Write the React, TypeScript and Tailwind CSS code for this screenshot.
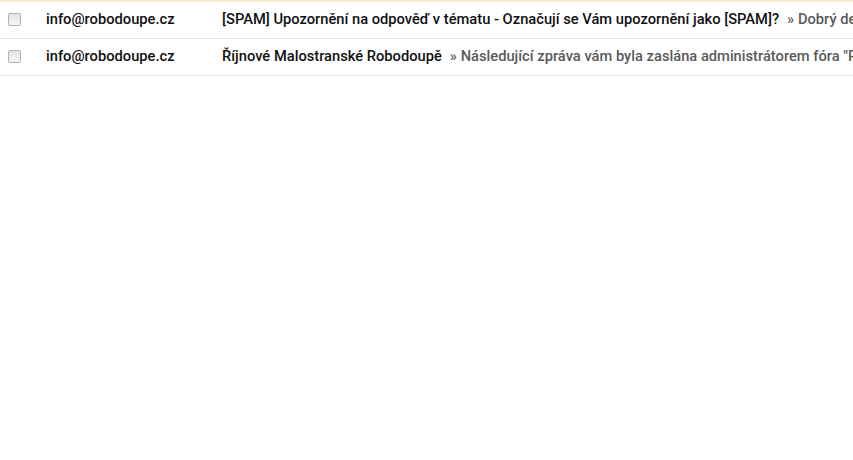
const ROWS = [
  {
    from: 'info@robodoupe.cz',
    subject: '[SPAM] Upozornění na odpověď v tématu - Označují se Vám upozornění jako [SPAM]?',
    snippet: '» Dobrý den, obdrželi jste toto upozornění',
  },
  {
    from: 'info@robodoupe.cz',
    subject: 'Říjnové Malostranské Robodoupě',
    snippet: '» Následující zpráva vám byla zaslána administrátorem fóra "Robodoupě"',
  },
]

export default function App() {
  return (
    <div className="w-[853px] h-[460px] bg-white overflow-hidden font-['Roboto',sans-serif] text-[14.7px]">
      <div className="border-t-2 border-[#fbefd6]">
        {ROWS.map((r, i) => (
          <div key={i} className="h-[37px] pb-[2px] flex items-center border-b border-[#e6e6e6] whitespace-nowrap overflow-hidden">
            <span className="ml-[8px] w-[13px] h-[13px] shrink-0 rounded-[2px] border border-[#b3b3b3] bg-gradient-to-b from-[#e4e4e4] to-[#f4f4f4]" />
            <span className="ml-[25px] w-[176px] shrink-0 font-medium text-[#111]">{r.from}</span>
            <span className="shrink-0 font-medium text-[#111]">{r.subject}</span>
            <span className="ml-[8px] shrink-0 font-medium text-[#5a5a5a]">{r.snippet}</span>
          </div>
        ))}
      </div>
    </div>
  )
}
